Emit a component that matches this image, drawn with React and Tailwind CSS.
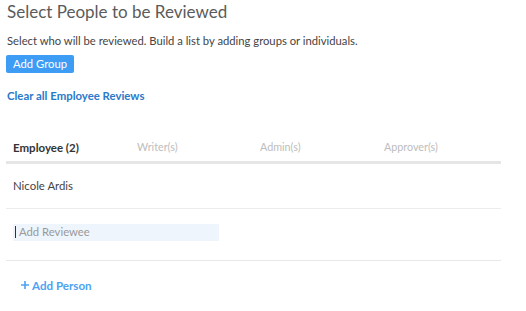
import React from 'react';

const columns = ['Writer(s)', 'Admin(s)', 'Approver(s)'];

const App = () => {
  return (
    <div className="w-[526px] h-[311px] bg-white overflow-hidden font-['Lato',sans-serif] text-[#555]">
      <div className="px-[7px] pt-[1px]">
        <h2 className="text-[17px] leading-[22px] text-[#5b5b5b]">Select People to be Reviewed</h2>
        <p className="mt-[11px] text-[11.25px] leading-[14px] text-[#444]">
          Select who will be reviewed. Build a list by adding groups or individuals.
        </p>
        <button className="mt-[7px] -ml-[1px] h-[18px] w-[68px] rounded-[2px] bg-[#3d9cf4] text-[11.25px] text-white">
          Add Group
        </button>
        <div className="mt-[13px] text-[11.4px] font-bold text-[#2b79c9]">Clear all Employee Reviews</div>
      </div>

      <div className="mt-[30px] ml-[6px] w-[495px]">
        <div className="grid grid-cols-[124px_123px_124px_1fr] h-[30px] items-center pl-[7px] border-b-[3px] border-[#e6e6e6] text-[10.75px]">
          <span className="font-bold text-[#333] text-[11.5px]">Employee (2)</span>
          {columns.map((c) => (
            <span key={c} className="text-[#bdbdbd]">{c}</span>
          ))}
        </div>
        <div className="h-[45px] flex items-center px-[7px] border-b border-[#ececec] text-[11.4px] text-[#444]">
          Nicole Ardis
        </div>
        <div className="h-[52px] flex items-start pt-[15px] px-[7px] border-b border-[#e8e8e8]">
          <div className="w-[206px] h-[17px] bg-[#eef5fd] flex items-center pl-[2px]">
            <span className="w-px h-[12px] bg-[#333] mr-[3px]" />
            <span className="text-[11.3px] text-[#999]">Add Reviewee</span>
          </div>
        </div>
        <button className="mt-[16px] ml-[15px] flex items-center gap-[3px] text-[11.6px] font-bold text-[#4da2f3]">
          <svg width="8" height="8" viewBox="0 0 8 8" className="shrink-0">
            <path d="M4 0v8M0 4h8" stroke="currentColor" strokeWidth="1.6" />
          </svg>
          Add Person
        </button>
      </div>
    </div>
  );
};

export default App;
